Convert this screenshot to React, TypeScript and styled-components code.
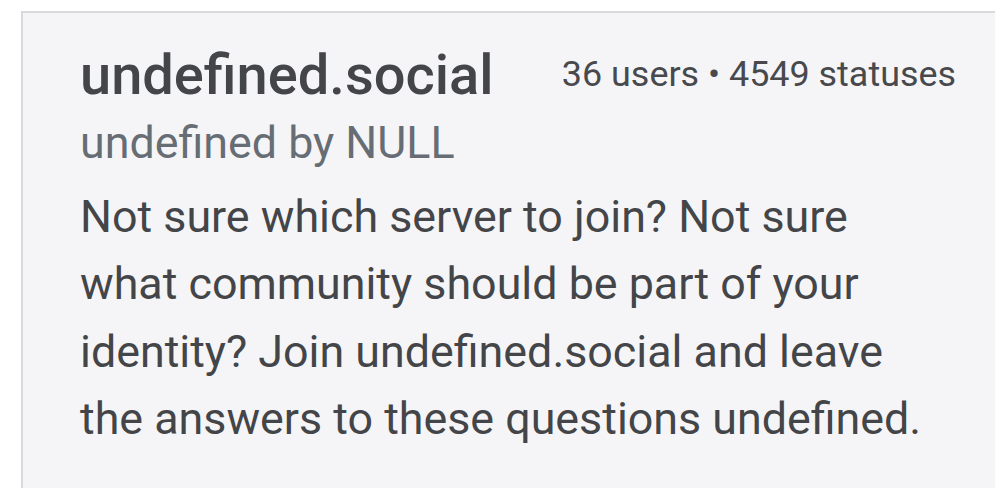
import React from 'react';
import styled, { createGlobalStyle } from 'styled-components';

const GlobalStyle = createGlobalStyle`
  html, body {
    margin: 0;
    padding: 0;
    background: #ffffff;
    font-family: Roboto, "Liberation Sans", Arial, sans-serif;
  }
`;

const Page = styled.div`
  padding: 11px 0 0 21px;
  height: 488px;
  box-sizing: border-box;
  overflow: hidden;
`;

const Card = styled.article`
  background: #f5f5f7;
  border-top: 2px solid #d9d9db;
  border-left: 2px solid #d9d9db;
  padding: 29px 39px 40px 57px;
  min-height: 100%;
  box-sizing: border-box;
`;

const Header = styled.header`
  display: flex;
  justify-content: space-between;
  align-items: flex-start;
  gap: 24px;
`;

const Title = styled.h2`
  margin: 0;
  font-size: 56px;
  line-height: 67px;
  font-weight: 500;
  color: #434548;
`;

const Stats = styled.div`
  margin-top: 5px;
  font-size: 35.9px;
  line-height: 54px;
  color: #48494c;
  white-space: nowrap;
`;

const Admin = styled.div`
  font-size: 44.8px;
  line-height: 67.2px;
  color: #676d74;
`;

const Description = styled.p`
  margin: 7px 0 0;
  font-size: 44.8px;
  line-height: 67.2px;
  color: #444548;
  max-width: 880px;
`;

export default function App() {
  return (
    <Page>
      <GlobalStyle />
      <Card>
        <Header>
          <Title>undefined.social</Title>
          <Stats>36 users • 4549 statuses</Stats>
        </Header>
        <Admin>undefined by NULL</Admin>
        <Description>
          Not sure which server to join? Not sure what community should be part of your
          identity? Join undefined.social and leave the answers to these questions undefined.
        </Description>
      </Card>
    </Page>
  );
}
